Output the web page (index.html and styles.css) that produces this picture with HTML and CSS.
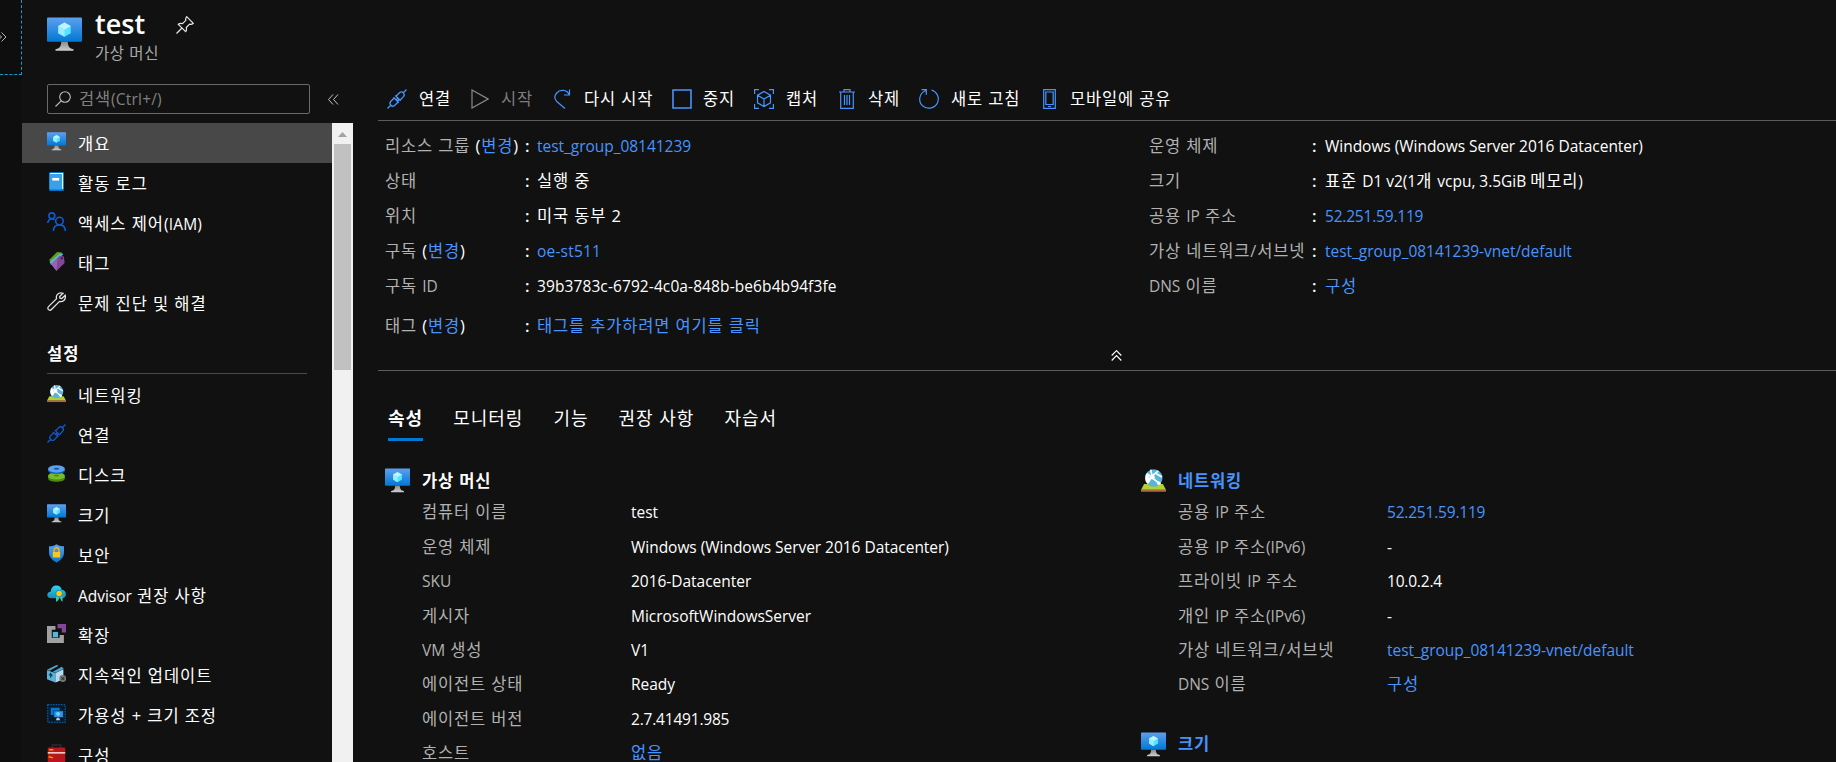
FILE: index.html
```html
<!DOCTYPE html>
<html lang="ko">
<head>
<meta charset="utf-8">
<title>test - 가상 머신</title>
<link rel="stylesheet" href="styles.css">
</head>
<body>
<svg class="defs" aria-hidden="true">
  <defs>
    <linearGradient id="gScreen" x1="0" y1="0" x2="0" y2="1"><stop offset="0" stop-color="#5ea0ef"/><stop offset="1" stop-color="#0078d4"/></linearGradient>
    <linearGradient id="gStand" x1="0" y1="0" x2="0" y2="1"><stop offset="0" stop-color="#8a8a8a"/><stop offset="1" stop-color="#cfcfcf"/></linearGradient>
    <linearGradient id="gCloud" x1="0" y1="0" x2="0" y2="1"><stop offset="0" stop-color="#32d4f5"/><stop offset="1" stop-color="#198ab3"/></linearGradient>
    <symbol id="vm" viewBox="0 0 18 18">
      <rect y="0.3" width="18" height="12.4" rx=".5" fill="url(#gScreen)"/>
      <path d="M7.3 12.7h3.4c0 2.6 1.2 3.6 2.9 3.8v.9H4.400v-.9c1.700-.2 2.900-1.200 2.900-3.800z" fill="url(#gStand)"/>
      <path d="M9 2.800l3.200 1.850v3.700L9 10.200 5.800 8.350v-3.700z" fill="#50e6ff"/>
      <path d="M9 2.800l3.200 1.850L9 6.500 5.800 4.650z" fill="#c3f1ff"/>
      <path d="M5.800 4.650L9 6.500v3.700L5.800 8.350z" fill="#9cebff"/>
    </symbol>
    <symbol id="net" viewBox="0 0 18 18">
      <path d="M2.200 11.500h13.600L18 15.800H0z" fill="#b4d22f"/><path d="M0 15.400h18v1.700H0z" fill="#a9684a"/>
      <circle cx="9.200" cy="7.200" r="6.300" fill="#59b4d9"/>
      <path d="M4.500 3.200C2.600 5.500 2.600 9 4.600 11.400L7.200 8.200 5.400 5.500z" fill="#fff"/>
      <path d="M5 4.500l8.500 7M4.800 11l3.500-5.500L12.500 2M8 6.200L7 1.200M10 3.500l5 3" stroke="#fff" stroke-width="1.200" fill="none"/>
      <circle cx="8.300" cy="6.600" r="1.600" fill="#fff"/><circle cx="12.900" cy="11" r="1.300" fill="#fff"/>
    </symbol>
    <symbol id="plug" viewBox="0 0 20 20">
      <g fill="none" stroke="currentColor" stroke-width="1.300"><path d="M.5 19.500L4 16M16 4L19.500.5M9 7.200l3.500-3.500c1-.9 2.700-.9 3.800.2s1.100 2.700.2 3.700L13 11.200zM7.200 9L3.700 12.500c-.9 1-.9 2.700.2 3.800s2.700 1.100 3.700.2L11.200 13zM6.500 8.300l5.300 5.400M8.300 6.500l5.400 5.300M9 11l1.500-1.500M10.400 12.300l1.500-1.500"/></g>
    </symbol>
    <symbol id="book" viewBox="0 0 18 18"><path d="M2 1.300Q2 0 3.300 0H16v18H3.300Q2 18 2 16.700z" fill="#0072c6"/><path d="M2.300 2h11.900v14.600H3.300q-1-.1-1-1z" fill="#3aa0e8"/><path d="M3 .9h12.300V16h-1V1.900H3z" fill="#fff"/><rect x="5" y="5.600" width="6.500" height="2.500" fill="#fff"/></symbol>
    <symbol id="people" viewBox="0 0 18 18"><g fill="none" stroke="#0f5bd0" stroke-width="1.500"><circle cx="4.600" cy="3.600" r="2.800"/><path d="M.8 10.500C.8 8.200 2.500 6.600 4.600 6.600c1 0 1.800.3 2.400.8"/><circle cx="11.800" cy="8.500" r="3.600"/><path d="M6 18c.2-3.600 2.500-5.800 5.800-5.800s5.400 2.200 5.600 5.800"/></g></symbol>
    <symbol id="tag" viewBox="0 0 18 18"><path d="M2 7.500L9.500 0l4.500.5 1 1.500L4 11z" fill="#5ea10b"/><path d="M2.500 9.500L12 1.300l3.500.9L4 12.500z" fill="#59b4d9"/><path d="M4 11.500l8-8 4 .8.700 6.200L9 18z" fill="#804998"/><path d="M4 11.500l6-6L9 18z" fill="#a66bbd" opacity=".7"/><circle cx="14" cy="6" r="1" fill="#2d1640"/></symbol>
    <symbol id="wrench" viewBox="0 0 18 18"><path d="M15.200 1.200L12 4.200l.3 1.700 1.700.3 3.200-3.100c.6 2.500-.2 4.200-1.500 5.200-1.200.9-2.600 1-3.800.6L4.200 16.600c-.8.900-2 .9-2.800.1s-.8-2 0-2.800l7.700-7.600c-.5-1.500-.2-3 .8-4.100 1.300-1.400 3.300-1.800 5.300-1z" fill="none" stroke="#e6e6e6" stroke-width="1.200"/></symbol>
    <symbol id="disk" viewBox="0 0 18 18"><path d="M1 11.500v2c0 4.500 16 4.500 16 0v-2z" fill="#4f8a10"/><ellipse cx="9" cy="11.300" rx="8" ry="3.500" fill="#76bc2d"/><ellipse cx="9" cy="11" rx="2.500" ry=".8" fill="#4f8a10"/><path d="M1 4.500v1.700c0 4.300 16 4.300 16 0V4.500z" fill="#0062b8"/><ellipse cx="9" cy="4.700" rx="8" ry="3.500" fill="#5ea0ef"/><ellipse cx="9" cy="4.500" rx="2.600" ry=".9" fill="#0b5cb0"/></symbol>
    <symbol id="shield" viewBox="0 0 18 18"><path d="M9 .2c2.300 1.600 4.600 1.900 7.100 1.900v6.300c0 4.700-4.100 7.500-7.100 9.400-3-1.900-7.100-4.700-7.100-9.400V2.100C4.400 2.100 6.700 1.800 9 .2z" fill="url(#gScreen)"/><path d="M6.700 8V6c0-3.300 4.600-3.300 4.600 0v2" fill="none" stroke="#ffb900" stroke-width="1.300"/><rect x="5.500" y="7.600" width="7" height="5.300" rx=".5" fill="#ffc61a"/></symbol>
    <symbol id="advisor" viewBox="0 0 18 18"><path d="M4 13.500C-1 13.300-.8 7.500 3.600 7 4-.1 13-.2 14 5.500c5 .4 5.200 7.500.3 8z" fill="url(#gCloud)"/><path d="M8.500 11v6l2.200-1.500L12 12l1.200 3.500 1.500 1.500v-6z" fill="#3fc7a5"/><circle cx="11.500" cy="9" r="3.600" fill="#1b93c0"/><circle cx="11.500" cy="9" r="2.600" fill="#ffca00"/></symbol>
    <symbol id="ext" viewBox="0 0 18 18"><path d="M0 2h8v3.500H4.500V13H12v-2.500h4V18H0z" fill="#a0a1a2"/><path d="M10 0h8v8h-4V4h-4z" fill="#804998"/><rect x="5.500" y="7.500" width="5" height="5" fill="#59b4d9"/></symbol>
    <symbol id="box" viewBox="0 0 18 18"><path d="M0 6l8 2.500v9L0 14.500z" fill="#59b4d9"/><path d="M8 8.500L15.500 5v9.500L8 17.500z" fill="#b5dcee"/><path d="M0 5.500L9 1l2 .7L2.500 6.400zM5.500 7.300L14 2.700l1.800 1.700L8 8.200z" fill="#4aa6d0"/><path d="M3.500 9v4M2 10.800L3.500 9 5 11.500" stroke="#10394c" fill="none"/><circle cx="15" cy="13.800" r="3.300" fill="#777"/><path d="M13.500 12.300l3 3m0-3l-3 3" stroke="#222" stroke-width=".9"/></symbol>
    <symbol id="scale" viewBox="0 0 18 18"><rect x=".7" y=".7" width="16.600" height="16.600" fill="#061a2c" stroke="#0b5a9c" stroke-width="1.200" stroke-dasharray="1.500 1"/><path d="M3.500 3.500h8.500v7H3.500z" fill="#0078d4"/><path d="M6.500 6.500h9v6.300h-9z" fill="#3b8fe8" stroke="#061a2c" stroke-width=".5"/><circle cx="10.500" cy="9.300" r="1.800" fill="#50e6ff"/><path d="M9.500 13h2l1 2.500H8.300z" fill="#c8c8c8"/></symbol>
    <symbol id="toolbox" viewBox="0 0 18 18"><path d="M5 3.500V1h8v2.500" fill="none" stroke="#2b2b2b" stroke-width="1.300"/><rect x=".7" y="3.300" width="16.600" height="14" rx="1" fill="#b9161c"/><path d="M.7 7.800h16.600V9H.7z" fill="#fff"/><path d="M2 5.500h4M1.500 12l4 1" stroke="#ff8c00" stroke-width="1.500"/></symbol>
  </defs>
</svg>

<div class="shell">
  <div class="rail"><div class="rail-box"><svg width="7" height="10" viewBox="0 0 7 10" fill="none" stroke="#b5b5b5"><path d="M-3 .5L1.500 5-3 9.500M1.500.5L6 5 1.500 9.500"/></svg></div></div>

  <div class="blade">
    <header class="head">
      <svg class="head-icon"><use href="#vm"/></svg>
      <div class="head-text"><h1>test</h1><p>가상 머신</p></div>
      <svg class="pin" viewBox="0 0 18 18" fill="none" stroke="#e8e8e8" stroke-width="1.200"><path d="M.5 17.500L6 12M2.300 8.300l7.400 7.400c1-1.300 1-2.700.6-4.200l3.300-3.300c1.300.3 2.600.1 3.700-.9L10.700.7c-1 1.100-1.200 2.400-.9 3.700L6.500 7.700C5 7.300 3.600 7.300 2.300 8.300z"/></svg>
    </header>

    <div class="body">
      <aside class="side">
        <div class="search-row">
          <div class="search"><svg width="16" height="16" viewBox="0 0 16 16" fill="none" stroke="#bdbdbd" stroke-width="1.100"><circle cx="10" cy="6" r="5.300"/><path d="M6.200 9.800L.5 15.500"/></svg><span>검색<span class="en wide">(Ctrl+/)</span></span></div>
          <svg class="collapse" width="11" height="11" viewBox="0 0 11 11" fill="none" stroke="#c4c4c4"><path d="M5 .5l-4.500 5 4.500 5M10 .5l-4.500 5 4.500 5"/></svg>
        </div>
        <div class="menu-wrap">
          <nav class="menu">
            <a class="item active"><svg><use href="#vm"/></svg>개요</a>
            <a class="item"><svg><use href="#book"/></svg>활동 로그</a>
            <a class="item"><svg><use href="#people"/></svg><span>액세스 제어<span class="en wide">(IAM)</span></span></a>
            <a class="item"><svg><use href="#tag"/></svg>태그</a>
            <a class="item"><svg><use href="#wrench"/></svg>문제 진단 및 해결</a>
            <h2>설정</h2>
            <a class="item"><svg><use href="#net"/></svg>네트워킹</a>
            <a class="item plug"><svg><use href="#plug"/></svg>연결</a>
            <a class="item"><svg><use href="#disk"/></svg>디스크</a>
            <a class="item"><svg><use href="#vm"/></svg>크기</a>
            <a class="item"><svg><use href="#shield"/></svg>보안</a>
            <a class="item"><svg><use href="#advisor"/></svg><span><span class="en">Advisor</span> 권장 사항</span></a>
            <a class="item"><svg><use href="#ext"/></svg>확장</a>
            <a class="item"><svg><use href="#box"/></svg>지속적인 업데이트</a>
            <a class="item"><svg><use href="#scale"/></svg>가용성 + 크기 조정</a>
            <a class="item"><svg><use href="#toolbox"/></svg>구성</a>
          </nav>
          <div class="scroll"><svg width="21" height="21" viewBox="0 0 21 21"><path d="M6 14l4.500-5 4.500 5z" fill="#a3a3a3"/></svg><div class="thumb"></div></div>
        </div>
      </aside>

      <main class="main">
        <div class="toolbar">
          <a class="t1"><svg width="20" height="20"><use href="#plug"/></svg>연결</a>
          <a class="t2 off"><svg width="18" height="20" viewBox="0 0 18 20"><path d="M1 1l16 9-16 9z"/></svg>시작</a>
          <a class="t3"><svg width="17" height="20" viewBox="0 0 17 20"><path d="M15.500.5v5.500H10M15.200 5.500C12.500.5 6 .2 2.700 4 .2 7 .5 10 2.500 12.200L11 19.500"/></svg>다시 시작</a>
          <a class="t4"><svg width="20" height="20" viewBox="0 0 20 20"><path d="M1 1h18v18H1z" stroke-width="1.600"/></svg>중지</a>
          <a class="t5"><svg width="20" height="20" viewBox="0 0 20 20"><path d="M.6 5V.6H5M15 .6h4.400V5M19.400 15v4.400H15M5 19.400H.6V15M10 2.500l6.500 3.700v7.600L10 17.500l-6.500-3.700V6.200zM3.500 6.200L10 10l6.500-3.800M10 10v7.500"/></svg>캡처</a>
          <a class="t6"><svg width="16" height="20" viewBox="0 0 16 20"><path d="M0 3h16M5 3V.7h6V3M1.700 3v16.300h12.600V3M5.500 6v10M8 6v10M10.500 6v10"/></svg>삭제</a>
          <a class="t7"><svg width="20" height="20" viewBox="0 0 20 20"><path d="M2.500.7h4.800v5M6.800 1.500c-7.300 3-8 12-2.200 16 4.600 3.200 11.400 1.600 13.900-3.800C20.700 8.500 18 2.700 12.500 1"/></svg>새로 고침</a>
          <a class="t8"><svg width="13" height="20" viewBox="0 0 13 20"><path d="M.7.700h11.600v18.600H.7zM2.800 3h7.400v12.500H2.800zM5 17.500h3"/></svg>모바일에 공유</a>
        </div>

        <section class="ess">
          <dl class="ess-l">
            <div><dt>리소스 그룹 <b>(<a>변경</a>)</b></dt><i>:</i><dd><a class="en">test_group_08141239</a></dd></div>
            <div><dt>상태</dt><i>:</i><dd>실행 중</dd></div>
            <div><dt>위치</dt><i>:</i><dd>미국 동부 2</dd></div>
            <div><dt>구독 <b>(<a>변경</a>)</b></dt><i>:</i><dd><a class="en wide">oe-st511</a></dd></div>
            <div><dt>구독 <span class="en">ID</span></dt><i>:</i><dd><span class="en guid">39b3783c-6792-4c0a-848b-be6b4b94f3fe</span></dd></div>
            <div class="tags"><dt>태그 <b>(<a>변경</a>)</b></dt><i>:</i><dd><a>태그를 추가하려면 여기를 클릭</a></dd></div>
          </dl>
          <dl class="ess-r">
            <div><dt>운영 체제</dt><i>:</i><dd><span class="en">Windows (Windows Server 2016 Datacenter)</span></dd></div>
            <div><dt>크기</dt><i>:</i><dd>표준 <span class="en">D1 v2(1</span>개 <span class="en">vcpu, 3.5GiB </span>메모리<span class="en">)</span></dd></div>
            <div><dt>공용 <span class="en">IP</span> 주소</dt><i>:</i><dd><a class="en ip">52.251.59.119</a></dd></div>
            <div><dt>가상 네트워크/서브넷</dt><i>:</i><dd><a class="en">test_group_08141239-vnet/default</a></dd></div>
            <div><dt><span class="en">DNS</span> 이름</dt><i>:</i><dd><a>구성</a></dd></div>
          </dl>
        </section>
        <div class="fold"><svg width="11" height="11" viewBox="0 0 11 11" fill="none" stroke="#fff" stroke-width="1.200"><path d="M.7 5.500l4.800-4.800 4.800 4.800M.7 10.500l4.800-4.800 4.800 4.800"/></svg></div>

        <div class="tabs"><a class="on">속성</a><a>모니터링</a><a>기능</a><a>권장 사항</a><a>자습서</a></div>

        <div class="props">
          <section class="col">
            <h3><svg><use href="#vm"/></svg>가상 머신</h3>
            <dl>
              <div><dt>컴퓨터 이름</dt><dd class="en">test</dd></div>
              <div><dt>운영 체제</dt><dd class="en">Windows (Windows Server 2016 Datacenter)</dd></div>
              <div><dt class="en">SKU</dt><dd class="en">2016-Datacenter</dd></div>
              <div><dt>게시자</dt><dd class="en">MicrosoftWindowsServer</dd></div>
              <div><dt><span class="en">VM</span> 생성</dt><dd class="en">V1</dd></div>
              <div><dt>에이전트 상태</dt><dd class="en">Ready</dd></div>
              <div><dt>에이전트 버전</dt><dd class="en ip">2.7.41491.985</dd></div>
              <div><dt>호스트</dt><dd><a>없음</a></dd></div>
            </dl>
          </section>
          <section class="col">
            <h3><svg><use href="#net"/></svg><a>네트워킹</a></h3>
            <dl>
              <div><dt>공용 <span class="en">IP</span> 주소</dt><dd><a class="en ip">52.251.59.119</a></dd></div>
              <div><dt>공용 <span class="en">IP</span> 주소<span class="en">(IPv6)</span></dt><dd class="en">-</dd></div>
              <div><dt>프라이빗 <span class="en">IP</span> 주소</dt><dd class="en ip">10.0.2.4</dd></div>
              <div><dt>개인 <span class="en">IP</span> 주소<span class="en">(IPv6)</span></dt><dd class="en">-</dd></div>
              <div><dt>가상 네트워크/서브넷</dt><dd><a class="en">test_group_08141239-vnet/default</a></dd></div>
              <div><dt><span class="en">DNS</span> 이름</dt><dd><a>구성</a></dd></div>
            </dl>
            <h3 class="size"><svg><use href="#vm"/></svg><a>크기</a></h3>
          </section>
        </div>
      </main>
    </div>
  </div>
</div>
</body>
</html>
```
FILE: styles.css
```css
* { box-sizing: border-box; }
html, body { margin: 0; height: 762px; overflow: hidden; }
body {
  background: #111;
  color: #fff;
  font-family: "Open Sans", "Noto Sans CJK KR", sans-serif;
  font-size: 16.5px;
  letter-spacing: .85px;
  line-height: 24px;
  white-space: nowrap;
}
h1, h2, h3, p, dl, dt, dd { margin: 0; font-weight: 400; }
svg { display: block; flex: none; }
i { font-style: normal; }
.defs { position: absolute; width: 0; height: 0; }
.en { font-size: 15.5px; letter-spacing: -.03px; }
.en.ip { letter-spacing: -.2px; }
.en.guid { letter-spacing: .1px; }
.en.wide { letter-spacing: .2px; }

.shell { display: flex; height: 762px; }
.rail { width: 22px; background: #0e0e0e; flex: none; }
.rail-box { height: 75px; border: dashed #0a9fd0; border-width: 0 1px 1px 0; padding-top: 32px; }
.blade { flex: 1; min-width: 0; display: flex; flex-direction: column; }

.head { display: flex; height: 84px; padding-left: 25px; flex: none; }
.head-icon { width: 35px; height: 35px; margin: 17px 13px 0 0; }
.head-text { width: 81px; }
.head h1 { font-size: 27px; font-weight: 600; letter-spacing: 0; line-height: 34px; margin-top: 7px; }
.head p { color: #aaa; font-size: 15.5px; line-height: 24px; letter-spacing: .6px; }
.pin { width: 18px; height: 18px; margin-top: 16px; }

.body { flex: 1; display: flex; min-height: 0; }
.side { width: 331px; display: flex; flex-direction: column; flex: none; }
.search-row { display: flex; align-items: center; height: 30px; margin: 0 0 9px 25px; }
.search { width: 263px; height: 30px; border: 1px solid #6a6a6a; border-radius: 2px; display: flex; align-items: center; gap: 8px; padding-left: 7px; color: #808080; }
.collapse { margin-left: 18px; }
.menu-wrap { flex: 1; min-height: 0; display: flex; }
.menu { width: 310px; overflow: hidden; letter-spacing: .95px; }
.item { display: flex; align-items: center; height: 40px; padding: 1px 0 0 25px; gap: 12px; }
.item svg { width: 19px; height: 19px; margin-top: -4px; }
.item.active { background: #484848; }
.item.plug svg { color: #0f5bd0; }
.menu h2 { font-size: 16.5px; font-weight: 600; height: 51px; margin: 0 25px 1px; padding-top: 19px; border-bottom: 1px solid #484848; }
.scroll { width: 21px; background: #f1f1f1; }
.thumb { height: 226px; margin: 0 2px; background: #c1c1c1; }

.main { flex: 1; min-width: 0; padding-left: 25px; }
.toolbar { display: flex; height: 37px; border-bottom: 1px solid #5c5c5c; padding: 0 0 7px 9px; }
.toolbar a { display: flex; align-items: center; flex: none; }
.toolbar svg { color: #4894fe; fill: none; stroke: #4894fe; stroke-width: 1.2; }
.toolbar .off { color: #7d7d7d; }
.toolbar .off svg { stroke: #8a8a8a; }
.t1 { width: 84px; gap: 12px; }
.t2 { width: 83px; gap: 12px; }
.t3 { width: 118px; gap: 13px; }
.t4 { width: 82px; gap: 11px; }
.t5 { width: 85px; gap: 12px; }
.t6 { width: 80px; gap: 13px; }
.t7 { width: 124px; gap: 12px; }
.t8 { gap: 14px; }

.ess a, .props a { color: #4894fe; }
.ess { display: flex; height: 229px; padding: 7px 0 0 7px; }
.ess dl > div { display: flex; height: 35px; align-items: center; }
.ess .tags { margin-top: 5px; }
.ess-l { width: 764px; }
.ess dt { width: 140px; color: #b2b2b2; }
.ess dt b { color: #fff; font-weight: 400; }
.ess i { width: 12px; letter-spacing: 0; font-weight: 600; }
.ess-r dt { width: 163px; }
.ess-r i { width: 13px; }
.fold { height: 21px; border-bottom: 1px solid #5c5c5c; padding-left: 733px; }

.tabs { display: flex; gap: 30px; padding: 33px 0 0 10px; font-size: 18px; letter-spacing: 1px; height: 71px; }
.tabs a { height: 37px; line-height: 28px; }
.tabs .on { font-weight: 700; border-bottom: 3px solid #0078d4; }

.props { display: flex; padding: 26px 0 0 7px; }
.col { width: 756px; flex: none; }
.col h3 { display: flex; align-items: center; gap: 12px; height: 25px; font-weight: 600; font-size: 16.5px; }
.col h3 svg { width: 25px; height: 25px; }
.col dl { padding: 2px 0 0 37px; }
.col dl > div { display: flex; height: 34.45px; align-items: center; }
.col dt { width: 209px; color: #b2b2b2; }
.col .size { margin-top: 30px; }
```
